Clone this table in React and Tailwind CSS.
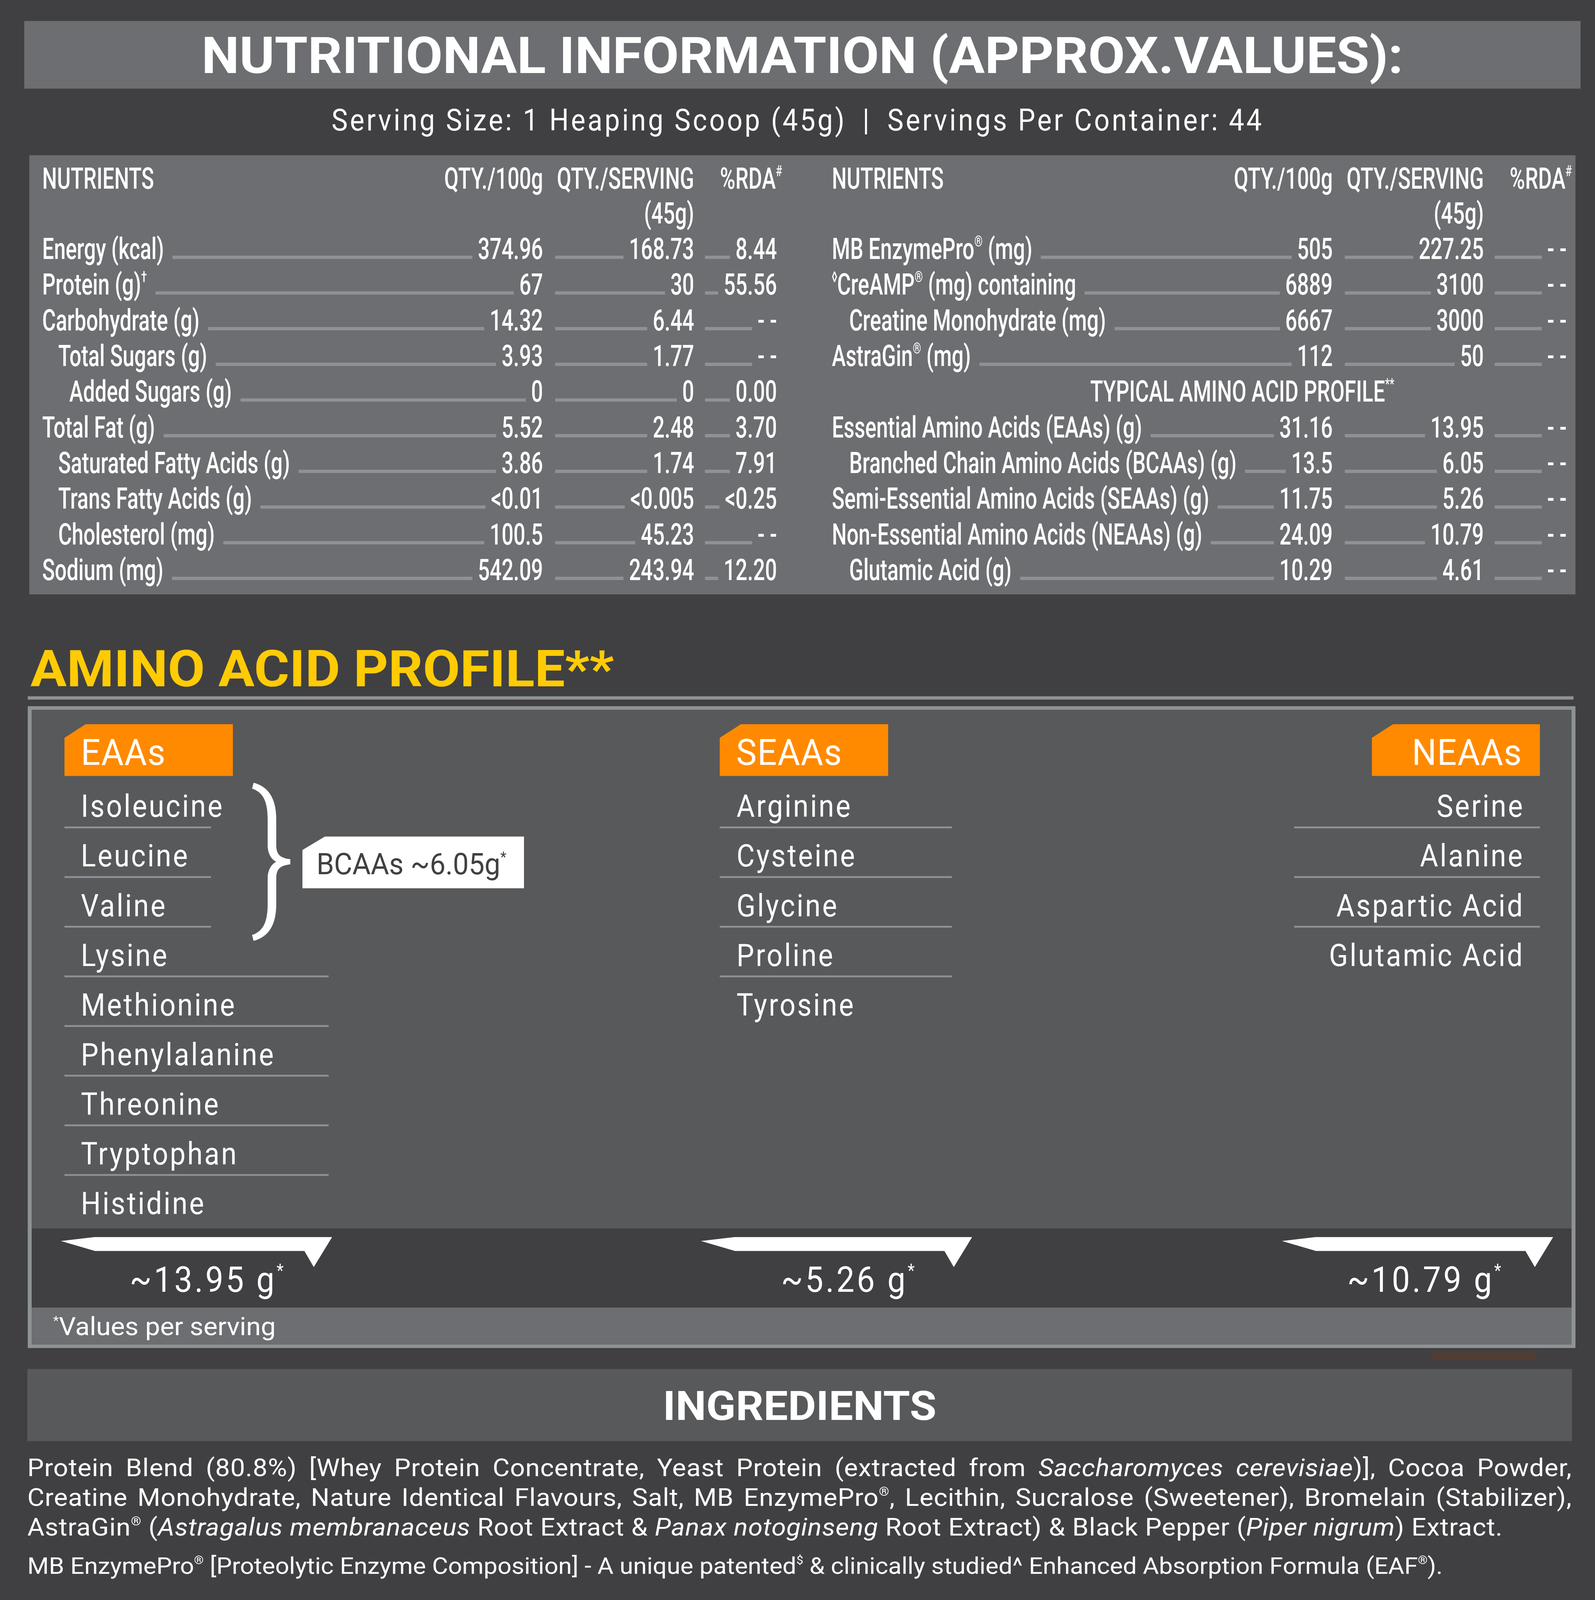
import React, { useEffect, useState } from "react";

function Sup({ children, className = "" }) {
  return <sup className={`top-[-0.85em] text-[0.5em] ${className}`}>{children}</sup>;
}

function Leader({ className = "" }) {
  return <div className={`mb-[21px] h-[9px] min-w-0 flex-1 bg-[#8e9295] ${className}`} />;
}

function Row({ name, v1, v2, v3, indent = "" }) {
  return (
    <div className="flex h-[97px] items-end leading-[97px]">
      <div className="flex w-[1942px] items-end">
        <span className={`whitespace-nowrap ${indent}`}>{name}</span>
        <Leader className="ml-[33px] mr-[21px]" />
        <span className="whitespace-nowrap">{v1}</span>
      </div>
      <div className="ml-[47px] flex w-[539px] items-end">
        <Leader className="mr-[21px]" />
        <span className="whitespace-nowrap">{v2}</span>
      </div>
      <div className="ml-[42px] flex w-[279px] items-end">
        <Leader className="mr-[21px]" />
        <span className="whitespace-nowrap">{v3}</span>
      </div>
    </div>
  );
}

function Header() {
  return (
    <div className="-mt-[6px] flex h-[172px] leading-[95px]">
      <div className="flex w-[1942px] items-start justify-between">
        <span>NUTRIENTS</span>
        <span>QTY./100g</span>
      </div>
      <div className="ml-[47px] w-[539px] text-right">
        <div>QTY./SERVING</div>
        <div>(45g)</div>
      </div>
      <div className="ml-[42px] w-[279px] text-right">
        <span className="mr-[-20px]">
          %RDA<Sup>#</Sup>
        </span>
      </div>
    </div>
  );
}

const DASH = "- -";

function Column({ children, className = "" }) {
  return (
    <div className={`w-[1900px] ${className}`}>
      <div className="w-[2879px] origin-left scale-x-[0.66] text-[81px] font-medium text-white">{children}</div>
    </div>
  );
}

function Item({ children, width = "w-full", last = false, right = false, pad = "pl-[42px]" }) {
  return (
    <div
      className={`h-[135px] border-b-[5px] pt-[26px] text-[84px] leading-[100px] text-white ${width} ${pad} ${
        last ? "border-transparent" : "border-[#8e9295]"
      } ${right ? "text-right" : ""}`}
    >
      <span
        className={`inline-block scale-x-[0.85] whitespace-nowrap tracking-[0.06em] ${
          right ? "origin-right" : "origin-left"
        }`}
      >
        {children}
      </span>
    </div>
  );
}

function Tab({ children, right = false }) {
  return (
    <div
      className={`h-[141px] bg-[#ff8a00] pt-[12px] text-[98px] leading-[129px] text-white [clip-path:polygon(54px_0,100%_0,100%_100%,0_100%,0_37px)] ${
        right ? "w-[430px] pr-[45px] text-right" : "w-[431px] pl-[42px]"
      }`}
    >
      <span className={`inline-block scale-x-[0.9] tracking-[0.02em] ${right ? "origin-right" : "origin-left"}`}>
        {children}
      </span>
    </div>
  );
}

function Arrow({ className = "", pad = "", value }) {
  return (
    <div className={`w-[694px] ${className}`}>
      <svg width="694" height="82" viewBox="0 0 694 82" className="block">
        <polygon points="0,11 87,0 694,0 647,82 623,38 87,38" fill="#ffffff" />
      </svg>
      <div className={`-mt-[21px] text-[97px] leading-[110px] text-white ${pad}`}>
        <span className="inline-block origin-left scale-x-[0.85] whitespace-nowrap tracking-[0.07em]">
          {value}
          <Sup>*</Sup>
        </span>
      </div>
    </div>
  );
}

function JLine({ words }) {
  return (
    <div className="flex justify-between whitespace-nowrap">
      {words.map((w, i) => (
        <span key={i}>{w}</span>
      ))}
    </div>
  );
}

const LINE1 = [
  "Protein",
  "Blend",
  "(80.8%)",
  "[Whey",
  "Protein",
  "Concentrate,",
  "Yeast",
  "Protein",
  "(extracted",
  "from",
  <i>Saccharomyces</i>,
  <>
    <i>cerevisiae</i>)],
  </>,
  "Cocoa",
  "Powder,",
];

const LINE2 = [
  "Creatine",
  "Monohydrate,",
  "Nature",
  "Identical",
  "Flavours,",
  "Salt,",
  "MB",
  <>
    EnzymePro<Sup>®</Sup>,
  </>,
  "Lecithin,",
  "Sucralose",
  "(Sweetener),",
  "Bromelain",
  "(Stabilizer),",
];

const PAGE_H = 4350;

function Page() {
  return (
    <div className="h-[4350px] w-[4082px] bg-[#404042] pt-[57px] text-white">
      {/* Title */}
      <div className="ml-[62px] h-[184px] w-[3983px] bg-[#6d6e71] pt-[7px] text-center text-[137px] font-bold leading-[177px] text-white">
        NUTRITIONAL INFORMATION (APPROX.VALUES):
      </div>

      {/* Serving */}
      <div className="mt-[36px] h-[100px] text-center text-[82px] leading-[100px] text-white">
        <span className="inline-block scale-x-[0.85] whitespace-nowrap tracking-[0.08em]">
          Serving Size: 1 Heaping Scoop (45g)<span className="mx-[48px]">|</span>Servings Per Container: 44
        </span>
      </div>

      {/* Table panel */}
      <div className="ml-[75px] mt-[45px] flex h-[1194px] w-[3957px] bg-[#6d6e71] pl-[33px] pt-[22px]">
        <Column>
          <Header />
          <div className="mt-[18px]">
            <Row name="Energy (kcal)" v1="374.96" v2="168.73" v3="8.44" />
            <Row
              name={
                <>
                  Protein (g)<Sup>†</Sup>
                </>
              }
              v1="67"
              v2="30"
              v3="55.56"
            />
            <Row name="Carbohydrate (g)" v1="14.32" v2="6.44" v3={DASH} />
            <Row name="Total Sugars (g)" indent="pl-[62px]" v1="3.93" v2="1.77" v3={DASH} />
            <Row name="Added Sugars (g)" indent="pl-[105px]" v1="0" v2="0" v3="0.00" />
            <Row name="Total Fat (g)" v1="5.52" v2="2.48" v3="3.70" />
            <Row name="Saturated Fatty Acids (g)" indent="pl-[62px]" v1="3.86" v2="1.74" v3="7.91" />
            <Row name="Trans Fatty Acids (g)" indent="pl-[62px]" v1="<0.01" v2="<0.005" v3="<0.25" />
            <Row name="Cholesterol (mg)" indent="pl-[62px]" v1="100.5" v2="45.23" v3={DASH} />
            <Row name="Sodium (mg)" v1="542.09" v2="243.94" v3="12.20" />
          </div>
        </Column>
        <Column className="ml-[121px]">
          <Header />
          <div className="mt-[18px]">
            <Row
              name={
                <>
                  MB EnzymePro<Sup>®</Sup> (mg)
                </>
              }
              v1="505"
              v2="227.25"
              v3={DASH}
            />
            <Row
              name={
                <>
                  <Sup>◊</Sup>CreAMP<Sup>®</Sup> (mg) containing
                </>
              }
              v1="6889"
              v2="3100"
              v3={DASH}
            />
            <Row name="Creatine Monohydrate (mg)" indent="pl-[67px]" v1="6667" v2="3000" v3={DASH} />
            <Row
              name={
                <>
                  AstraGin<Sup>®</Sup> (mg)
                </>
              }
              v1="112"
              v2="50"
              v3={DASH}
            />
            <div className="h-[97px] whitespace-nowrap pl-[1002px] leading-[97px]">
              TYPICAL AMINO ACID PROFILE<Sup>**</Sup>
            </div>
            <Row name="Essential Amino Acids (EAAs) (g)" v1="31.16" v2="13.95" v3={DASH} />
            <Row name="Branched Chain Amino Acids (BCAAs) (g)" indent="pl-[67px]" v1="13.5" v2="6.05" v3={DASH} />
            <Row name="Semi-Essential Amino Acids (SEAAs) (g)" v1="11.75" v2="5.26" v3={DASH} />
            <Row name="Non-Essential Amino Acids (NEAAs) (g)" v1="24.09" v2="10.79" v3={DASH} />
            <Row name="Glutamic Acid (g)" indent="pl-[67px]" v1="10.29" v2="4.61" v3={DASH} />
          </div>
        </Column>
      </div>

      {/* Amino acid profile heading */}
      <div className="ml-[78px] mt-[129px] h-[148px] text-[138px] font-bold leading-[148px] text-[#ffcb05]">
        AMINO ACID PROFILE**
      </div>
      <div className="ml-[71px] h-[9px] w-[3956px] bg-[#8e9295]" />

      {/* Amino box */}
      <div className="ml-[71px] mt-[18px] w-[3961px] border-[10px] border-[#8e9295]">
        <div className="flex h-[1410px] bg-[#58595b] pt-[39px]">
          {/* EAAs */}
          <div className="relative ml-[84px] w-[676px]">
            <Tab>EAAs</Tab>
            <div className="mt-[7px]">
              <Item width="w-[375px]">Isoleucine</Item>
              <Item width="w-[375px]">Leucine</Item>
              <Item width="w-[375px]">Valine</Item>
              <Item>Lysine</Item>
              <Item>Methionine</Item>
              <Item>Phenylalanine</Item>
              <Item>Threonine</Item>
              <Item>Tryptophan</Item>
              <Item last>Histidine</Item>
            </div>
            <svg className="absolute left-[480px] top-[159px]" width="98" height="430" viewBox="0 0 98 430">
              <path
                d="M4 0 C40 10 62 40 62 100 L62 170 C62 195 72 205 98 208 L98 222 C72 225 62 235 62 260 L62 330 C62 390 40 420 4 430 L0 414 C28 404 40 380 40 330 L40 260 C40 240 48 222 62 215 C48 208 40 190 40 170 L40 100 C40 50 28 26 0 16 Z"
                fill="#ffffff"
              />
            </svg>
            <div className="absolute left-[609px] top-[305px] h-[141px] w-[567px] bg-white pl-[36px] pt-[26px] text-[80px] leading-[100px] text-[#404042] [clip-path:polygon(58px_0,100%_0,100%_100%,0_100%,0_37px)]">
              <span className="inline-block origin-left scale-x-[0.9] whitespace-nowrap">
                BCAAs ~6.05g<Sup>*</Sup>
              </span>
            </div>
          </div>

          {/* SEAAs */}
          <div className="ml-[1001px] w-[594px]">
            <Tab>SEAAs</Tab>
            <div className="mt-[7px]">
              <Item pad="pl-[43px]">Arginine</Item>
              <Item pad="pl-[43px]">Cysteine</Item>
              <Item pad="pl-[43px]">Glycine</Item>
              <Item pad="pl-[43px]">Proline</Item>
              <Item pad="pl-[43px]" last>
                Tyrosine
              </Item>
            </div>
          </div>

          {/* NEAAs */}
          <div className="ml-auto mr-[81px] flex w-[629px] flex-col items-end">
            <Tab right>NEAAs</Tab>
            <div className="mt-[7px] w-full">
              <Item right pad="pr-[40px]">Serine</Item>
              <Item right pad="pr-[40px]">Alanine</Item>
              <Item right pad="pr-[40px]">Aspartic Acid</Item>
              <Item right pad="pr-[40px]" last>
                Glutamic Acid
              </Item>
            </div>
          </div>
        </div>

        <div className="flex h-[215px] bg-[#404042] pt-[23px]">
          <Arrow className="ml-[75px]" pad="pl-[176px]" value="~13.95 g" />
          <Arrow className="ml-[944px]" pad="pl-[205px]" value="~5.26 g" />
          <Arrow className="ml-[793px]" pad="pl-[167px]" value="~10.79 g" />
        </div>

        <div className="h-[100px] bg-[#6d6e71] pl-[55px] pt-[2px] text-[68px] leading-[100px] text-white">
          <span className="whitespace-nowrap">
            <Sup>*</Sup>Values per serving
          </span>
        </div>
      </div>

      {/* smudge */}
      <div className="h-[57px] pt-[12px]">
        <div className="ml-[3660px] h-[20px] w-[274px] rounded-full bg-[#5b3d2c] opacity-70 blur-[3px]" />
      </div>

      {/* Ingredients */}
      <div className="ml-[70px] h-[196px] w-[3953px] bg-[#58595b] pt-[4px] text-center text-[111px] font-bold leading-[192px] text-white">
        INGREDIENTS
      </div>

      <div className="ml-[70px] mt-[32px] w-[3953px] text-[67px] leading-[81px] tracking-[0.015em] text-white">
        <JLine words={LINE1} />
        <JLine words={LINE2} />
        <div className="whitespace-nowrap">
          AstraGin<Sup>®</Sup> (<i>Astragalus membranaceus</i> Root Extract &amp; <i>Panax notoginseng</i> Root
          Extract) &amp; Black Pepper (<i>Piper nigrum</i>) Extract.
        </div>
        <div className="mt-[24px] whitespace-nowrap text-[63px] tracking-normal">
          MB EnzymePro<Sup>®</Sup> [Proteolytic Enzyme Composition] - A unique patented<Sup>$</Sup> &amp; clinically
          studied^ Enhanced Absorption Formula (EAF<Sup>®</Sup>).
        </div>
      </div>
    </div>
  );
}

export default function App() {
  const [vh, setVh] = useState(() => (typeof window !== "undefined" && window.innerHeight) || PAGE_H);

  useEffect(() => {
    const onResize = () => setVh(window.innerHeight || PAGE_H);
    onResize();
    window.addEventListener("resize", onResize);
    return () => window.removeEventListener("resize", onResize);
  }, []);

  const frameH = Math.min(vh, PAGE_H);
  const s = frameH / PAGE_H;

  return (
    <div
      className="w-[4082px] overflow-hidden bg-[#404042] [font-family:Roboto,'Noto_Sans',sans-serif]"
      style={{ height: frameH }}
    >
      <div className="origin-top" style={{ transform: `scaleY(${s})` }}>
        <Page />
      </div>
    </div>
  );
}
